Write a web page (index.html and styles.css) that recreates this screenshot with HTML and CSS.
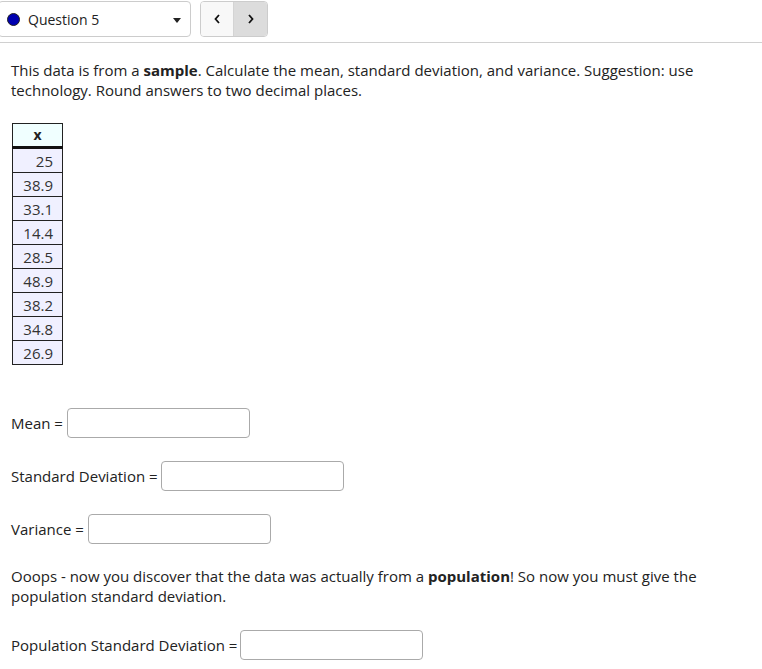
FILE: index.html
```html
<!DOCTYPE html>
<html>
<head>
<meta charset="utf-8">
<link rel="stylesheet" href="styles.css">
</head>
<body>
<div class="topbar">
  <div class="select">
    <span class="dot"></span>
    <span class="qname">Question 5</span>
    <span class="caret"></span>
  </div>
  <div class="nav">
    <button class="navbtn prev"><svg width="6" height="10" viewBox="0 0 6 10"><polyline points="5,1 1.5,5 5,9" fill="none" stroke="#111" stroke-width="1.8"/></svg></button>
    <button class="navbtn next"><svg width="6" height="10" viewBox="0 0 6 10"><polyline points="1,1 4.5,5 1,9" fill="none" stroke="#111" stroke-width="1.8"/></svg></button>
  </div>
</div>
<div class="content">
  <p class="text">This data is from a <b>sample</b>. Calculate the mean, standard deviation, and variance. Suggestion: use technology. Round answers to two decimal places.</p>
  <table class="data">
    <thead><tr><th>x</th></tr></thead>
    <tbody>
      <tr><td>25</td></tr>
      <tr><td>38.9</td></tr>
      <tr><td>33.1</td></tr>
      <tr><td>14.4</td></tr>
      <tr><td>28.5</td></tr>
      <tr><td>48.9</td></tr>
      <tr><td>38.2</td></tr>
      <tr><td>34.8</td></tr>
      <tr><td>26.9</td></tr>
    </tbody>
  </table>
  <div class="field first mean"><span>Mean =</span><span class="input"></span></div>
  <div class="field"><span>Standard Deviation =</span><span class="input"></span></div>
  <div class="field var"><span>Variance =</span><span class="input"></span></div>
  <p class="text oops">Ooops - now you discover that the data was actually from a <b>population</b>! So now you must give the population standard deviation.</p>
  <div class="field last"><span>Population Standard Deviation =</span><span class="input"></span></div>
</div>
</body>
</html>
```
FILE: styles.css
```css
html, body { margin: 0; padding: 0; background: #fff; }
body { font-family: "Open Sans", "DejaVu Sans", sans-serif; color: #222; font-size: 14px; }
.topbar {
  display: flex; align-items: flex-start; gap: 9px;
  height: 42px; border-bottom: 1px solid #d0d0d0;
}
.select {
  width: 193px; height: 36px; box-sizing: border-box; margin-left: -2px; margin-top: 1px;
  border: 1px solid #ccc; border-radius: 4px;
  display: flex; align-items: center; padding-left: 8px; position: relative;
}
.dot { width: 13px; height: 13px; border-radius: 50%; background: #0000b0; border: 1px solid #222; box-sizing: border-box; }
.qname { margin-left: 8px; font-size: 14px; color: #222; }
.caret {
  position: absolute; right: 9px; top: 16px;
  width: 0; height: 0; border-left: 4px solid transparent; border-right: 4px solid transparent; border-top: 5px solid #222;
}
.nav {
  display: flex; margin-top: 1px;
  border: 1px solid #ccc; border-radius: 4px; overflow: hidden; height: 36px; box-sizing: border-box;
}
.navbtn {
  width: 33px; height: 34px; border: 0; padding: 0; margin: 0;
  display: flex; align-items: center; justify-content: center;
}
.prev { background: #f8f8f8; border-right: 1px solid #d4d4d4; }
.next { background: #dcdcdc; }
.content { padding-left: 11px; }
.text { font-size: 15px; line-height: 20px; margin: 17px 0 0 0; max-width: 700px; color: #222; }
.data {
  border-collapse: collapse; margin-top: 23px; margin-left: 1px; width: 51px;
  font-size: 15px;
}
.data th {
  height: 22px; background: #f0ffff; border: 1px solid #222; border-bottom: 3px solid #111;
  font-weight: bold; padding: 0; text-align: center; line-height: 20px; font-size: 14px;
}
.data td {
  background: #f0f0ff; border: 1px solid #222; height: 23px; padding: 0 9px 0 0;
  text-align: right; line-height: 22px; color: #333;
}
.field { display: flex; align-items: center; gap: 3px; margin-top: 23px; font-size: 15px; color: #222; }
.field.first { margin-top: 43px; }
.field.mean { gap: 4px; }
.field.var { gap: 4px; }
.input {
  display: block; width: 183px; height: 30px; box-sizing: border-box;
  border: 1px solid #aaa; border-radius: 4px; background: #fff;
}
.oops { margin-top: 22px; }
.field.last { margin-top: 24px; }
```
